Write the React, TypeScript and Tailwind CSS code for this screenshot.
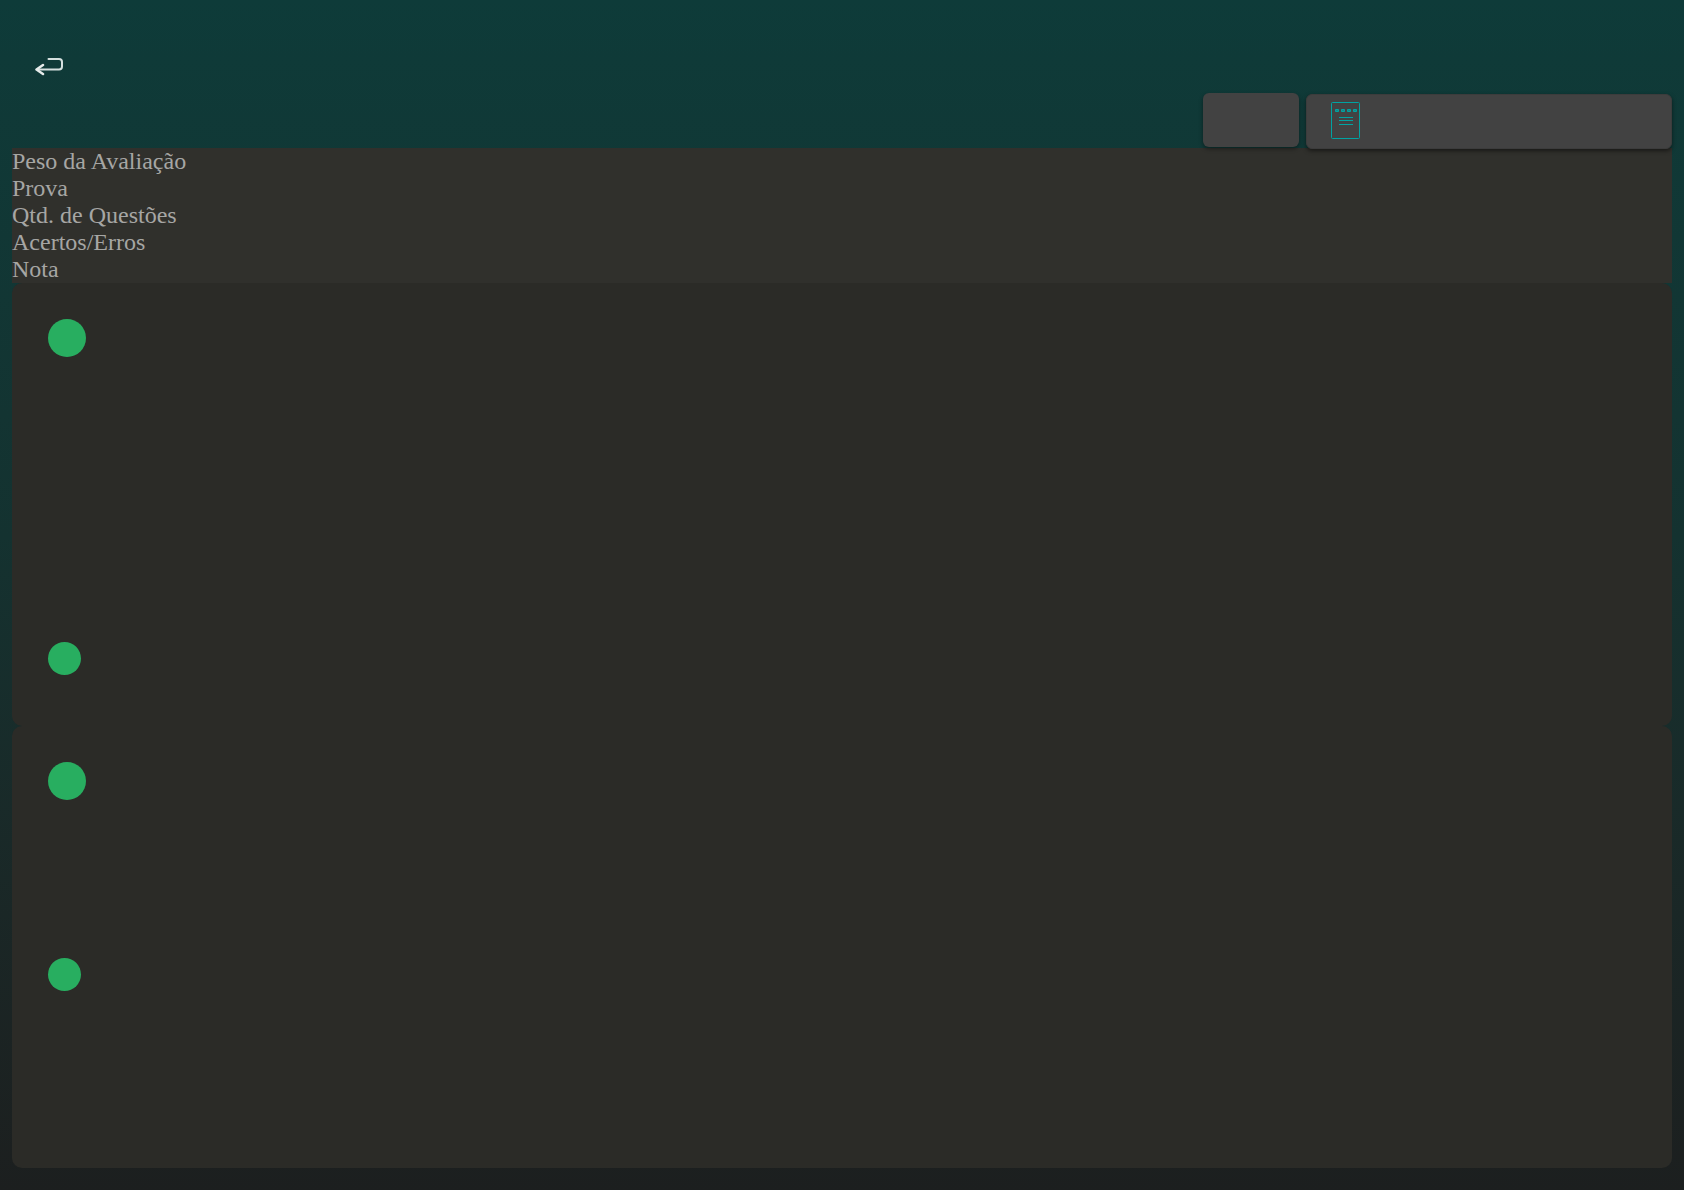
import React from 'react';

const columns = [
  'Peso da Avaliação',
  'Prova',
  'Qtd. de Questões',
  'Acertos/Erros',
  'Nota',
];

function BackIcon() {
  return (
    <svg
      width="28"
      height="18"
      viewBox="0 0 28 18"
      fill="none"
      stroke="#d5e0df"
      strokeWidth="2"
      strokeLinecap="round"
      strokeLinejoin="round"
      aria-hidden="true"
    >
      <path d="M13.500 1H24q3 0 3 3v4.500q0 3-3 3H3" />
      <path d="M8 7L1.500 11.500L8 16" stroke="#e6eceb" strokeWidth="2.500" />
    </svg>
  );
}

function NotesIcon() {
  return (
    <svg width="30" height="38" viewBox="0 0 30 38" fill="none" stroke="#00a3a3" aria-hidden="true">
      <rect x="0.500" y="0.500" width="28" height="36" rx="1" />
      <path
        d="M4.500 7.500h3v2h-3zM10.500 7.500h3v2h-3zM16.500 7.500h3v2h-3zM22.500 7.500h3v2h-3z"
        fill="#168585"
      />
      <path d="M8 15.500h14M8 18.500h14M8 22.500h14" />
    </svg>
  );
}

export default function App() {
  return (
    <div className="min-h-screen bg-linear-to-b from-[#0e3b39] via-[#143230] via-45% to-[#1c1f1f] px-3 pb-[22px] font-['Liberation_Serif',serif]">
      <header className="flex h-[93px] items-start pt-[58px] pl-[23px]">
        <button type="button" aria-label="Voltar" className="cursor-pointer">
          <BackIcon />
        </button>
      </header>

      <div className="relative z-10 flex h-[55px] items-start justify-end gap-[7px]">
        <button
          type="button"
          aria-label="Filtrar"
          className="h-[54px] w-24 rounded-md bg-[#424242] shadow-[0_2px_4px_rgba(0,0,0,0.4)]"
        />
        <button
          type="button"
          aria-label="Avaliações"
          className="mt-px flex h-[55px] w-[366px] items-start rounded-md border border-[#3c3c3c] bg-[#424242] pt-[7px] pl-6 shadow-[0_2px_4px_rgba(0,0,0,0.5)]"
        >
          <NotesIcon />
        </button>
      </div>

      <main>
        <ul className="bg-[#30302c] text-2xl leading-[27px] text-[#a6a6a4]">
          {columns.map((column) => (
            <li key={column}>{column}</li>
          ))}
        </ul>

        <section className="h-[443px] rounded-[10px] bg-[#2b2b27] p-9">
          <div className="size-[38px] rounded-full bg-[#28ae60]" />
          <div className="mt-[285px] size-[33px] rounded-full bg-[#28ae60]" />
        </section>

        <section className="h-[442px] rounded-[10px] bg-[#2b2b27] p-9">
          <div className="size-[38px] rounded-full bg-[#28ae60]" />
          <div className="mt-[158px] size-[33px] rounded-full bg-[#28ae60]" />
        </section>
      </main>
    </div>
  );
}
